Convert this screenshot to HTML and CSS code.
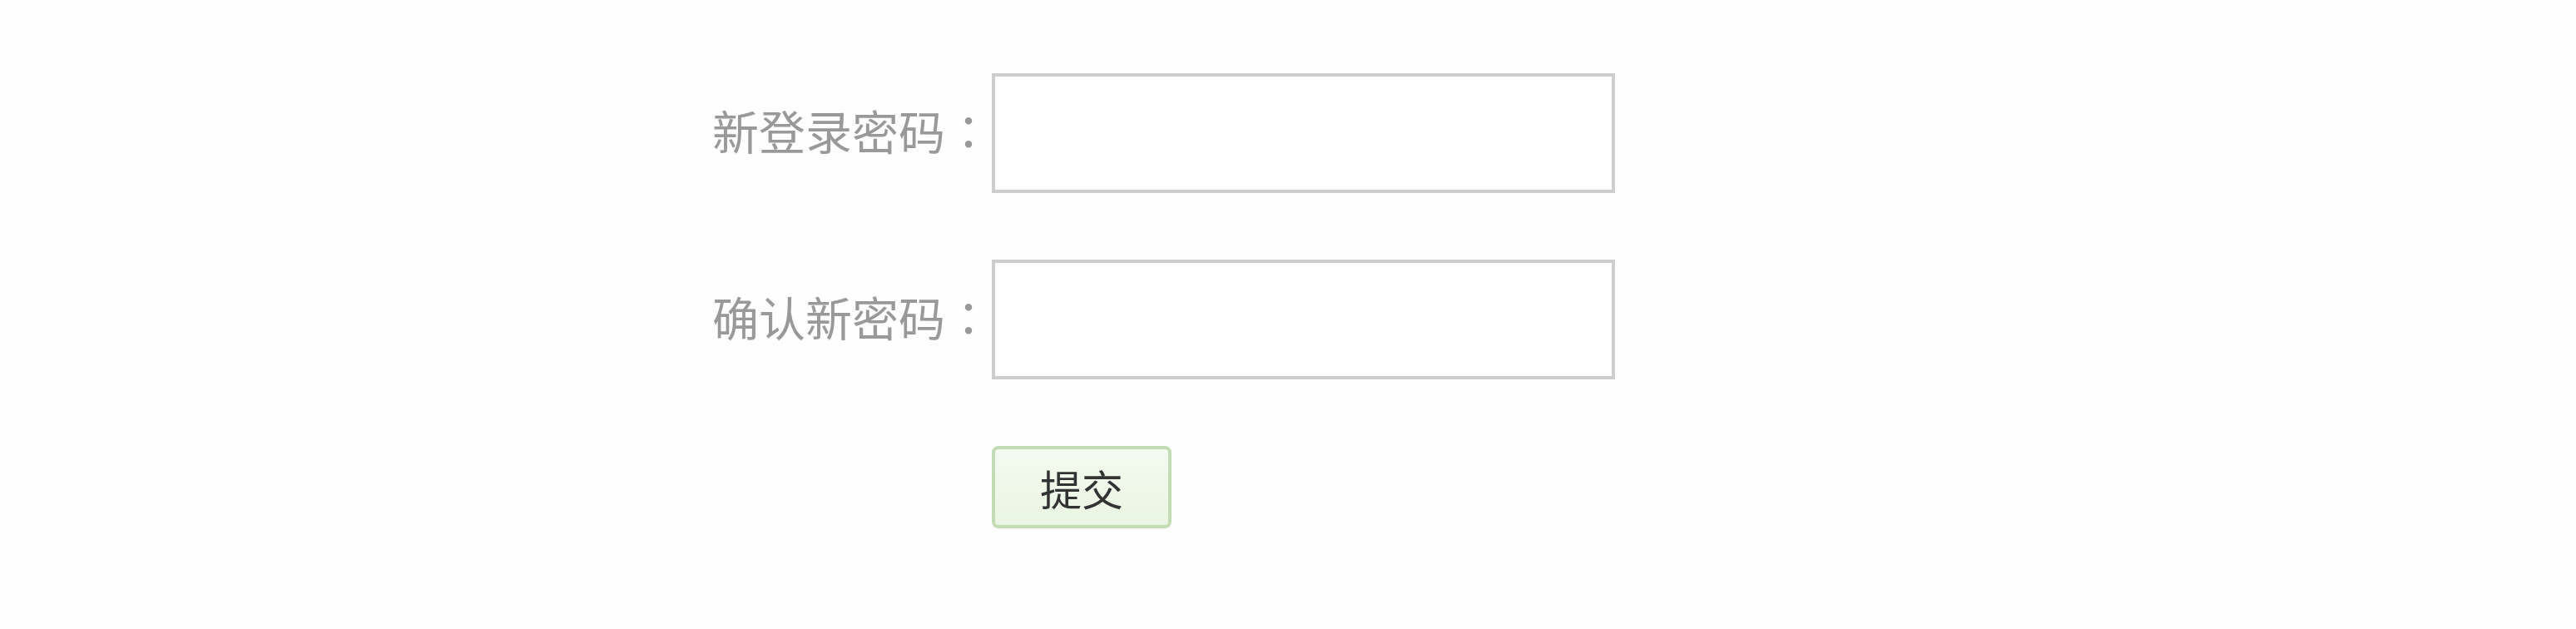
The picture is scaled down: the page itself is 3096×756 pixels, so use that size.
FILE: index.html
```html
<!DOCTYPE html>
<html lang="zh-CN">
<head>
<meta charset="utf-8">
<title>修改密码</title>
<link rel="stylesheet" href="styles.css">
</head>
<body>
<form class="pwd-form">
  <div class="row">
    <label class="label">新登录密码<span class="colon" lang="zh-TW">：</span></label>
    <input class="field" type="password">
  </div>
  <div class="row">
    <label class="label">确认新密码<span class="colon" lang="zh-TW">：</span></label>
    <input class="field" type="password">
  </div>
  <div class="row">
    <span class="label"></span>
    <button class="submit" type="button">提交</button>
  </div>
</form>
</body>
</html>
```

FILE: styles.css
```css
html, body {
  margin: 0;
  padding: 0;
  background: #fefefe;
}
body {
  font-family: "Noto Sans CJK SC", "Noto Sans", sans-serif;
}
.pwd-form {
  display: flex;
  flex-direction: column;
  gap: 80px;
  padding-top: 88px;
  margin-left: 852px;
}
.row {
  display: flex;
  align-items: center;
}
.label {
  box-sizing: border-box;
  width: 340px;
  padding-bottom: 8px;
  text-align: right;
  font-size: 56px;
  line-height: 1;
  color: #999;
  white-space: nowrap;
}
.colon {
  font-family: "Noto Sans CJK TC", "Noto Sans CJK JP", sans-serif;
}
.field {
  box-sizing: border-box;
  width: 749px;
  height: 144px;
  margin: 0;
  border: 4px solid #cdcdcd;
  background: #fff;
  outline: none;
  padding: 0 16px;
}
.submit {
  box-sizing: border-box;
  width: 216px;
  height: 99px;
  margin: 0;
  border: 4px solid #c2ddb3;
  border-radius: 8px;
  background: linear-gradient(#f4faf0, #e9f5e2);
  color: #333;
  font-family: "Noto Sans CJK SC", sans-serif;
  font-size: 50px;
  line-height: 1;
  padding: 0;
}
```
